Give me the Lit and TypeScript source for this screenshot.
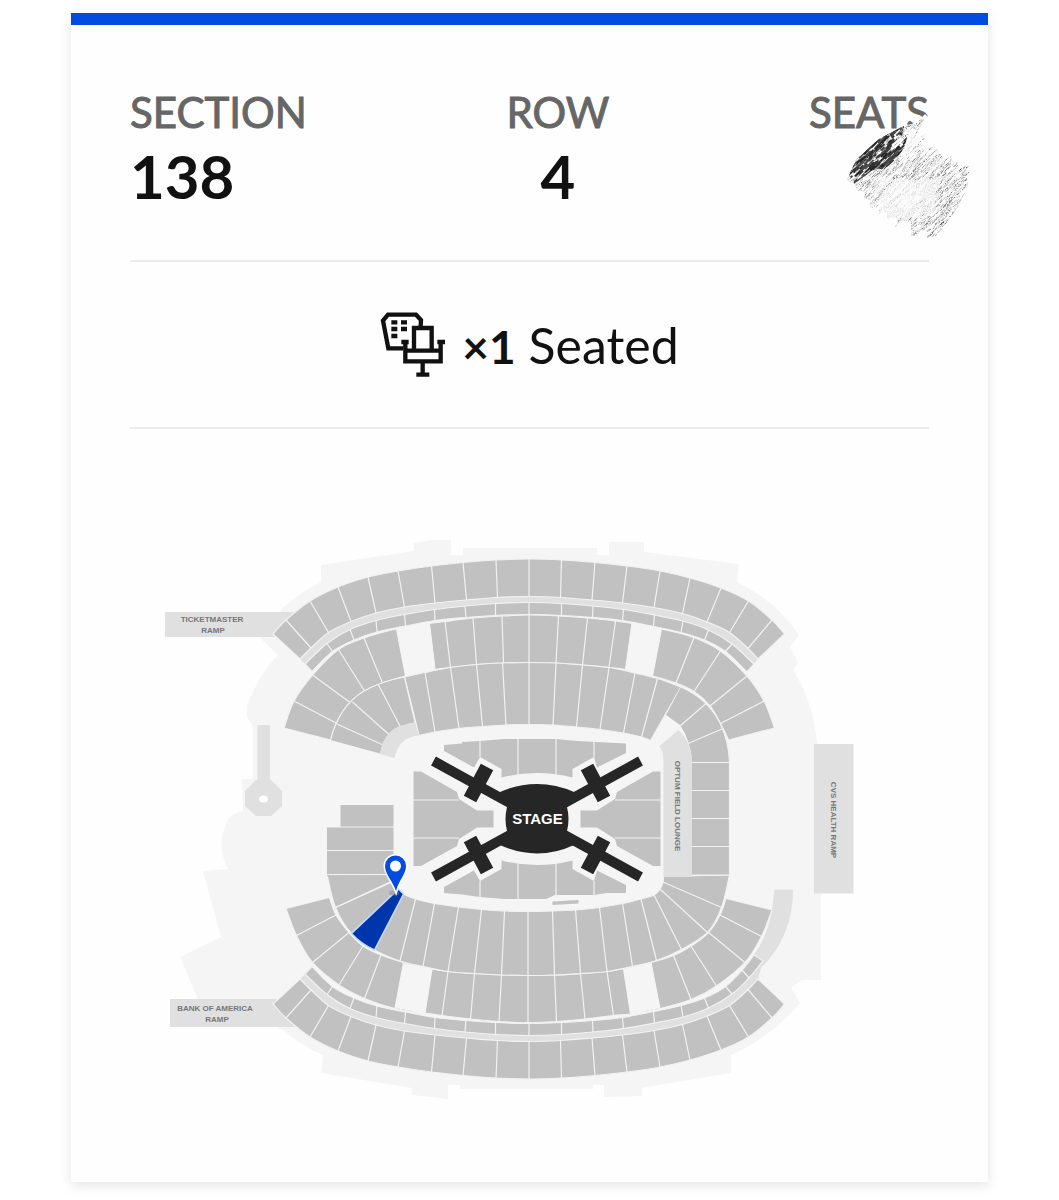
import { LitElement, html, svg, css } from "lit";
import { customElement, property } from "lit/decorators.js";

type Point = [number, number];

/** Catmull-Rom curve through the points, as the tail of a path. */
function curve(points: Point[]): string {
  let d = "";
  for (let i = 0; i < points.length - 1; i++) {
    const p0 = points[Math.max(i - 1, 0)];
    const p1 = points[i];
    const p2 = points[i + 1];
    const p3 = points[Math.min(i + 2, points.length - 1)];
    const c1 = [p1[0] + (p2[0] - p0[0]) / 6, p1[1] + (p2[1] - p0[1]) / 6];
    const c2 = [p2[0] - (p3[0] - p1[0]) / 6, p2[1] - (p3[1] - p1[1]) / 6];
    d += `C${c1[0].toFixed(1)} ${c1[1].toFixed(1)} ${c2[0].toFixed(1)} ${c2[1].toFixed(1)} ${p2[0]} ${p2[1]}`;
  }
  return d;
}

/** Closed shape between an outer and an inner edge. */
function band(outer: Point[], inner: Point[]): string {
  const back = [...inner].reverse();
  return `M${outer[0]}${curve(outer)}L${back[0]}${curve(back)}Z`;
}

const flip = (points: Point[]): Point[] => points.map(([x, y]) => [x, 1638 - y]);

const upperOuter: Point[] = [
  [273, 634], [286, 620], [310, 601], [338, 587], [368, 577], [398, 571], [431.5, 566], [463, 562.5], [496, 560],
  [529, 559], [561.5, 560], [595, 562.5], [627, 566], [660, 571], [690, 578], [721, 588], [748.5, 601], [772, 620], [784.5, 634],
];
const upperInner: Point[] = [
  [300, 659], [311, 648], [328.5, 632.5], [351, 621.5], [376, 613], [404.5, 607], [435, 603], [466.5, 600], [497.5, 597.5],
  [529, 596.5], [560.5, 597.5], [592, 600], [622.5, 603], [654, 607.5], [682.5, 613.5], [707, 622], [729.5, 632.5], [748, 648.5], [758, 659],
];
const suiteOuter: Point[] = [
  [305, 664], [327, 643.5], [350, 629.5], [376, 620.5], [404.5, 614.5], [434.5, 609.5], [465, 606], [495.5, 603.5],
  [529, 602.5], [561.5, 603.5], [593, 606], [623.5, 609.5], [654.5, 615], [683, 621], [708.5, 630], [732, 644], [754, 664],
];
const suiteInner: Point[] = [
  [312, 671.5], [332.5, 651.5], [354, 640], [377, 632], [405.5, 626], [435, 620.5], [466, 617.5], [495.5, 615.5],
  [529, 614.5], [561.5, 615.5], [592.5, 617.5], [622.5, 620.5], [653.5, 626.5], [681, 632.5], [704.5, 640], [725.5, 651.5], [747, 672],
];
const lowSuiteOuter: Point[] = [...flip(suiteOuter).slice(0, -1), [749, 978], [763, 961]];
const lowSuiteInner: Point[] = [...flip(suiteInner).slice(0, -1), [742, 970], [754, 955]];

const clubOuter: Point[] = [
  [284, 728], [294, 701], [312.5, 675], [338.5, 649.5], [364, 638], [396.5, 629], [429.5, 623.5], [445, 621.5], [473, 618], [502, 616],
  [529, 615], [558.5, 616], [587.5, 618], [615.5, 621], [632, 623.5], [661.5, 629], [694, 637.5], [720.5, 651], [747, 676], [764, 701], [774.5, 728],
];
const clubInner: Point[] = [
  [330.5, 740], [337, 723.5], [351.5, 703.5], [364.5, 691], [382.5, 683], [405.5, 676], [435, 669.5], [450.5, 667.5], [476.5, 664.5], [503.5, 663],
  [529, 662.5], [556, 663], [582.5, 665], [609, 667.5], [625.5, 669.5], [652.5, 676], [676, 683], [694, 691.5], [710, 706], [720.5, 723.5], [728.5, 740],
];
const lowClubOuter: Point[] = [
  [286, 908.5], [296.5, 935.5], [312.5, 962.5], [339, 985], [364.5, 998.5], [395, 1008.5], [425, 1013], [442, 1015.5], [470.5, 1019], [499, 1021.5],
  [528, 1022.5], [556.5, 1021.5], [585, 1019], [613.5, 1015.5], [630.5, 1014], [660, 1008.5], [691, 999.5], [716.5, 986], [745, 962.5], [761.5, 936.5], [772, 910],
];
const lowClubInner: Point[] = [
  [329.5, 897.5], [336, 915], [349, 932.5], [363, 946], [381, 955], [403.5, 962.5], [432, 969], [448, 971.5], [474.5, 973.5], [501.5, 975],
  [528, 975.5], [554.5, 975], [580.5, 973.5], [607, 971.5], [623.5, 968.5], [651, 962.5], [673.5, 955.5], [691, 946], [708.5, 932.5], [720, 915], [726, 898.5],
];

const bowlOuter: Point[] = [
  [404.5, 677], [425, 672.5], [450.5, 667.5], [476.5, 664.5], [502.5, 663], [529, 662.5], [556, 663], [582.5, 665], [609, 667.5], [635, 673], [657.5, 678.5], [681, 687],
];
const bowlInner: Point[] = [
  [419, 735.5], [435, 732], [459, 728.5], [482.5, 726.5], [506, 725], [529, 724.5], [553, 725], [576.5, 727], [600, 729.5], [623.5, 733], [641.5, 737], [650.5, 740.5],
];
const lowBowlOuter: Point[] = [
  [327, 874.5], [335.5, 907.5], [351.5, 933.5], [374.5, 950], [400, 961], [423, 966.5], [448, 971.5], [474.5, 973.5], [501.5, 975], [528, 975.5], [554.5, 975],
  [580.5, 973.5], [607, 971.5], [632.5, 966.5], [656.5, 960.5], [681.5, 949.5], [707.5, 932.5], [721.5, 907.5], [729.5, 875],
];
const lowBowlInner: Point[] = [
  [393.5, 874.5], [390, 882], [398.5, 889], [403.5, 894], [415.5, 899], [434.5, 903.5], [458.5, 907], [481.5, 909.5], [504.5, 911], [528, 911.5], [552.5, 911],
  [575.5, 910], [599.5, 907.5], [622.5, 903.5], [641, 899], [654, 895], [660, 889], [663, 882], [663.5, 876.5],
];

const FLOOR_TOP =
  "M444 745L462 743.5V742L480 741L504 739H556L577 741L626 743.5V753L597 767.5L594 757L572.500 769V777.500Q555 773 537 773Q519 773 501.500 777.500V769L480 757L474 767.500L444 751Z";
const FLOOR_BOTTOM =
  "M444 893L462 894.500L480 897L504 899H546L555 895H594L607 893H626V885L597 870.500L594 881L572.500 869V860.500Q555 865 537 865Q519 865 501.500 860.500V869L480 881L474 870.500L444 887Z";
const FLOOR_LEFT =
  "M413.500 771.500H421L457 792L459 799L477 810.500H493.500V827.500H477L459 839L457 846L421 866H413.500Z";

const GROUNDS =
  "M321 565L414 551V543L433 540H451V555H463V548H597V555H609V542H644V552L739 564L737 582Q775 600 799 635L790 647L798 663L793 670Q814 703 817 744V894H821V980H802L791 988L800 1003Q770 1038 731 1055V1073L642 1088V1096L604 1097V1085H593V1089H460V1085H448V1099L412 1095V1088L321 1073L323 1055Q302 1046 283 1030L240 1010L198 999L180 957L221 937L203 871L228 869Q215 845 228 820Q233 813 243 811L242 779H253V726L247 717V706Q258 676 278 655L260 638L283 608Q300 592 321 582Z";

/** Small repeatable random source for the pencil texture. */
function randomSource(seed: number): () => number {
  let s = seed;
  return () => {
    s = (s * 1664525 + 1013904223) % 4294967296;
    return s / 4294967296;
  };
}

function hatch(count: number, seed: number, box: number[], length: number, tone: [number, number], width: number) {
  const rnd = randomSource(seed);
  return Array.from({ length: count }, () => {
    const x = box[0] + rnd() * box[2];
    const y = box[1] + rnd() * box[3];
    const len = length * (0.3 + rnd());
    const g = Math.round(tone[0] + rnd() * (tone[1] - tone[0]));
    return svg`<path d="M${x.toFixed(1)} ${y.toFixed(1)}l${(-len * 0.72).toFixed(1)} ${(len * 0.69).toFixed(1)}" stroke="rgb(${g},${g},${g})" stroke-width=${width} />`;
  });
}

@customElement("pencil-scribble")
class PencilScribble extends LitElement {
  static styles = css`
    :host { display: block; }
    svg { display: block; width: 130px; height: 132px; }
  `;
  render() {
    return html`<svg viewBox="843 112 130 132" aria-hidden="true" fill="none">
      <defs>
        <clipPath id="blob">
          <path d="M902 127L880 139L857 160L848 180L856 184L858 190L866 192L865 198L872 200L870 208L880 207L880 214L888 211L889 219L898 217L896 228L905 220L912 222L912 236L918 236L922 229L928 232L928 239L937 237L960 205L969 186L967 168L960 170L958 160L951 166L953 156L945 160L938 149L932 154L934 147L921 150L927 134L914 141L926 117L915 124Z" />
        </clipPath>
        <clipPath id="shade">
          <path d="M905 126L880 139L857 160L848 180L855 177L855 184L872 171L880 168L884 170L898 158L906 146L908 137L895 150L893 144L903 135Z" />
        </clipPath>
        <clipPath id="edge">
          <path d="M925 238L935 238L956 208L954 205L944 220L938 221Z M957 166H970V180L960 196L964 175Z" />
        </clipPath>
        <filter id="grain" x="0" y="0" width="1" height="1">
          <feTurbulence type="fractalNoise" baseFrequency="0.8" numOctaves="2" seed="4" />
          <feColorMatrix values="0 0 0 0 1  0 0 0 0 1  0 0 0 0 1  5 0 0 0 -2.3" />
          <feComposite in2="SourceGraphic" operator="in" result="n" />
          <feMerge><feMergeNode in="SourceGraphic" /><feMergeNode in="n" /></feMerge>
        </filter>
      </defs>
      <path d="M900 134L908 125Q918 124 926 114L932 120L926 132L906 140Z" fill="#fefefe" />
      <g filter="url(#grain)">
        <g clip-path="url(#blob)">
          ${hatch(3200, 7, [846, 110, 130, 130], 8, [110, 255], 1)}
          ${hatch(240, 31, [884, 176, 58, 34], 14, [225, 255], 2)}
          ${hatch(70, 41, [900, 120, 40, 34], 9, [245, 255], 2)}
        </g>
        <g clip-path="url(#edge)">${hatch(160, 17, [925, 160, 50, 80], 6, [40, 120], 1)}</g>
      </g>
      <g clip-path="url(#shade)">
        ${hatch(420, 11, [848, 120, 66, 66], 9, [30, 80], 2)}
        ${hatch(120, 23, [848, 124, 66, 60], 3, [100, 190], 1)}
      </g>
    </svg>`;
  }
}

@customElement("venue-map")
class VenueMap extends LitElement {
  static styles = css`
    :host { display: block; }
    .map { display: block; width: 100%; height: auto; }
    .grounds { fill: #f5f5f5; }
    .seats { fill: #c1c1c1; }
    .soft { fill: #e0e0e0; }
    .lines { fill: none; stroke: #f2f2f2; stroke-width: 1.2; }
    .stage { fill: #262626; }
    .arm { fill: none; stroke: #262626; stroke-width: 10; }
    .cross { fill: none; stroke: #262626; stroke-width: 14; }
    .picked { fill: #0036ab; stroke: #c3d8fa; stroke-width: 1.5; }
    .pin { fill: #024ddf; stroke: #fff; stroke-width: 3; paint-order: stroke; }
    .label { font: bold 8px "Liberation Sans", Arial, sans-serif; fill: #777; text-anchor: middle; }
    .stage-label { font: bold 15px "Liberation Sans", Arial, sans-serif; fill: #fff; text-anchor: middle; }
  `;

  private tier(outer: Point[], inner: Point[]) {
    const lines = outer.map((p, i) => `M${p}L${inner[i]}`).join("");
    return svg`<path class="seats" d=${band(outer, inner)} />
      <path class="lines" d=${lines} />
      <path class="lines" d=${`M${outer[0]}${curve(outer)}M${inner[0]}${curve(inner)}`} />`;
  }

  private arms() {
    return [
      [1, 1], [-1, 1], [1, -1], [-1, -1],
    ].map(
      ([sx, sy]) => svg`<g transform="translate(537 819) scale(${sx} ${sy})">
        <path class="arm" d="M-103.500 -58L-20 -12" />
        <path class="cross" d="M-50 -52L-67 -20" />
      </g>`,
    );
  }

  render() {
    return html`<svg class="map" viewBox="130 429 799 753">
      <path class="grounds" d=${GROUNDS} />
      <path class="soft" d="M165 612H294L273 634L276 637H165Z" />
      <path class="soft" d="M170 999H276L300 1027H170Z" />
      <rect class="soft" x="814" y="744" width="39.500" height="149.500" />
      <rect class="soft" x="257.500" y="725" width="12.500" height="60" />
      <path class="soft" d="M256 780H271L282 791V806L271 816H256L245 806V791Z" />
      <ellipse cx="263.500" cy="799" rx="4.500" ry="3.500" fill="#fff" />

      <path class="soft" d=${band(upperInner, suiteOuter)} />
      <path class="soft" d=${band(flip(upperInner), lowSuiteOuter)} />
      <path class="soft" d="M774.500 889.500H793Q793 935 763 966L749 979L745 976L754 955Q768 935 772 910Z" />
      ${this.tier(upperOuter, upperInner)} ${this.tier(flip(upperOuter), flip(upperInner))}
      ${this.tier(suiteOuter, suiteInner)} ${this.tier(lowSuiteOuter, lowSuiteInner)}
      ${this.tier(clubOuter, clubInner)} ${this.tier(lowClubOuter, lowClubInner)}
      <path class="grounds" d="M396.500 628L429.500 622.500L435 669.500L405.500 676Z" />
      <path class="grounds" d="M632 622.500L661.500 628L652.500 676L625.500 669.500Z" />
      <path class="grounds" d="M403.500 963L432 969L425 1013L395 1008Z" />
      <path class="grounds" d="M623.500 969L651 962.500L660 1008L630.500 1014Z" />

      ${this.tier(bowlOuter, bowlInner)} ${this.tier(lowBowlOuter, lowBowlInner)}
      <path class="seats" d="M330.500 740Q339 706 364 691Q382 681 404.500 677L415 722.500L400 726Q385 732 380 753.500Z" />
      <path class="lines" d="M330.500 740Q339 706 364 691Q382 681 404.500 677L415 722.500M337 724L382 744.500M352.500 702L389.500 735M378.500 685L400 726" />
      <path class="soft" d="M380 754Q383 726 415 722.500L419 735.500Q399 737 394.500 758Z" />
      <path class="seats" d="M681 687Q708 699 720 723Q729 742 729.500 762V875H692V762Q691 741 680 725L666 715Z" />
      <path class="lines" d="M681 687Q708 699 720 723Q729 742 729.500 762V875M706 703.500L680 726M722 729L688 743.500M692 762.500H730M692 790.500H730M692 818.500H730M692 846.500H730M664 875H730" />
      <path class="soft" d="M678.500 730Q692 743 692 762V877H663.500V760Q663 750 659 746.500Z" />

      <path class="seats" d="M340.500 805H393.500V874.500L390 882L327 876V827.500H340.500Z" />
      <path class="lines" d="M340 827H394M327 850.500H394M327 874.500H394M335.500 907.500L390 883" />

      <path class="seats" d=${FLOOR_TOP} />
      <path class="seats" d=${FLOOR_BOTTOM} />
      <path class="lines" d="M480 740V757M518 738V775M556 738V775M594 741V757M480 881V898M518 863V900M556 863V898M594 881V896" />
      <path class="seats" d=${FLOOR_LEFT} />
      <path class="seats" d=${FLOOR_LEFT} transform="translate(1074 0) scale(-1 1)" />
      <path class="lines" d="M413 800H459M413 838H459M615 800H661M615 838H661" />
      <path class="seats" d="M552.500 901.500L578.500 900V903.500L552.500 905Z" />

      ${this.arms()}
      <path class="stage" d="M500 792Q518 784 537 784Q556 784 574 792L567 807Q570 819 567 831L574 845Q556 853.500 537 853.500Q518 853.500 500 845L507 831Q504 819 507 807Z" />
      <text class="stage-label" x="537.500" y="824">STAGE</text>

      <path class="picked" d="M398.500 889L403.500 894L374.500 950Q361 944 351.500 933.500Z" />
      <ellipse cx="394" cy="893" rx="5" ry="2.500" fill="#888" opacity="0.5" />
      <path class="pin" d="M396 891C392 880 385 874 385 866A10.500 10.500 0 0 1 406 866C406 874 399 880 396 891Z" />
      <circle cx="395.500" cy="866" r="5.500" fill="#fff" />

      <text class="label" x="212" y="622">TICKETMASTER</text>
      <text class="label" x="213" y="633">RAMP</text>
      <text class="label" x="215" y="1011">BANK OF AMERICA</text>
      <text class="label" x="217" y="1022">RAMP</text>
      <text class="label" transform="translate(675 806) rotate(90)">OPTUM FIELD LOUNGE</text>
      <text class="label" transform="translate(831 820) rotate(90)">CVS HEALTH RAMP</text>
    </svg>`;
  }
}

@customElement("app-root")
class AppRoot extends LitElement {
  @property() section = "138";
  @property() row = "4";

  static styles = css`
    :host {
      display: block;
      padding: 13px 71px 18px;
      background: #fff;
      color: #111;
      font-family: Lato, "Open Sans", sans-serif;
    }
    .card {
      border-top: 12px solid #024ddf;
      padding: 0 59px;
      background: #fefefe;
      box-shadow: 0 4px 12px rgba(0, 0, 0, 0.1);
    }
    .place {
      display: flex;
      justify-content: space-between;
      margin: 0;
      padding: 63px 0 44px;
      border-bottom: 2px solid #ececec;
    }
    .field { position: relative; text-align: center; }
    .field:first-child { text-align: left; }
    .field dt { font-size: 42px; line-height: 48px; color: #666; -webkit-text-stroke: 1px #666; }
    .field dd { margin: 0; font-size: 60px; line-height: 80px; font-weight: 700; }
    .scribble { position: absolute; top: 24px; right: -43px; }
    .admission {
      display: flex;
      align-items: center;
      justify-content: center;
      gap: 16px;
      height: 165px;
      border-bottom: 2px solid #ececec;
      font-size: 50px;
    }
    .icon { width: 66px; height: 66px; }
    .admission p { margin: 0; }
    .admission b { font-size: 46px; }
  `;

  render() {
    return html`<main class="card">
      <dl class="place">
        <div class="field"><dt>SECTION</dt><dd>${this.section}</dd></div>
        <div class="field"><dt>ROW</dt><dd>${this.row}</dd></div>
        <div class="field">
          <dt>SEATS</dt>
          <dd><pencil-scribble class="scribble"></pencil-scribble></dd>
        </div>
      </dl>
      <div class="admission">
        <svg class="icon" viewBox="60 66 198 198" fill="none" stroke="#111" stroke-width="13" aria-hidden="true">
          <path d="M130 175H85L69 92L84 74H168L183 90L182 108" />
          <path d="M94 97H112M123 97H141M94 117H112M123 117H141M94 138H112" />
          <path d="M162 180V114H215V180M124 156H146M232 156H255M136 156V214H242V156M136 182H242M188 214V254M169 254H208" />
        </svg>
        <p><b>×1</b> Seated</p>
      </div>
      <venue-map></venue-map>
    </main>`;
  }
}
